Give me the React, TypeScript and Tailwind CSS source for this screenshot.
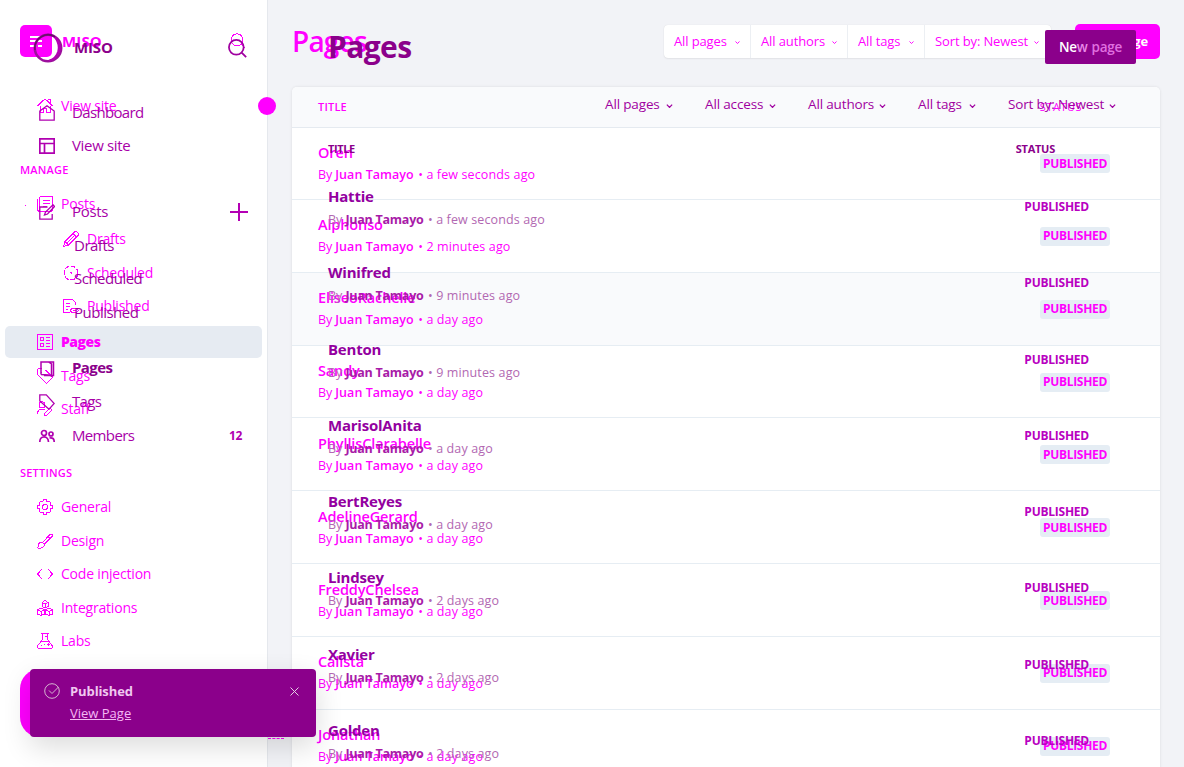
import React from "react";

type Glyph = { d: string; w?: number; size?: string; color?: string; crisp?: boolean };

function Icon({ d, w = 1, size = "h-4 w-4", color = "text-[#ff00ff]", crisp = true }: Glyph) {
  return (
    <svg
      viewBox="0 0 16 16"
      className={`block shrink-0 ${size} ${color}`}
      fill="none"
      stroke="currentColor"
      strokeWidth={w}
      shapeRendering={crisp ? "crispEdges" : "auto"}
    >
      <path d={d} />
    </svg>
  );
}

const icons = {
  home: "M.5 8 8 .8 15.5 8M3.500 8v6.500h3v-4h3v4h4V8M10.5 1.5h2.5V5",
  posts: "M2.5.5h13v12q0 3-3 3H3q-2.500 0-2.500-2.500V2.500M2.500.5v12q0 3-2 3M5.500 4.500h7M5.500 7.500h7M5.500 10.500h4",
  pencil: "M.5 15.500 2 10.500 11.500 1q1.500-1 3 .5t.5 3L5.500 14ZM2 10.500l3.500 3.500M10 2.500l3.500 3.500M4 12l8-8",
  published: "M6.500 14.500H.5V1.500h9l3 3V7M3 5.500h4M3 8.500h4M3 11.500h2M7 12.500q4-5 8.500 0-4.500 5-8.500 0M10 12.500h2.500",
  pages: "M.5.5h15v15H.5ZM3.500 3.500h3v3h-3ZM3.500 9.500h3v3h-3ZM9 3.500h4M9 6.500h4M9 9.500h4M9 12.500h4",
  tags: "M1 .5h4M.5 1v5.500L9.500 15.500 15.500 9.500M15.500 9 8.500 2M3.500 4.500h1",
  staff: "M5 .8q3 0 3 3T5 7 2 4 5 .8M.5 13Q.5 8 5 8l3 1M8 12l5-5 2 2-5 5-2.500.5Z",
  gear: "M6.500.5h3l.5 2 2-.5L14 4l-.5 2 2 .5v3l-2 .5.5 2-2 2-2-.5-.5 2h-3l-.5-2-2 .5-2-2 .5-2-2-.5v-3l2-.5L2 4l2-2 2 .5ZM5.500 8q0-2.500 2.500-2.500T10.500 8 8 10.500 5.500 8",
  brush: "M5.500 9.500 13 1.500q1-1 2 0t0 2L7.500 11 5.500 9.500q-4-.5-4 3L.5 15q7 1 7-4M11 3.500l2 2",
  code: "M5 3 .5 8 5 13M11 3l4.500 5-4.500 5",
  blocks: "M8 .5l3 2v4L8 8 5 6.500v-4ZM5 2.500l3 1.500 3-1.500M8 4v4M4 8l3.500 2v4L4 15.500.5 14v-4ZM12 8l3.500 2v4L12 15.500 8.500 14v-4ZM.5 10 4 11.500 7.500 10M8.500 10l3.500 1.500 3.500-1.500M4 11.500v4M12 11.500v4",
  flask: "M4 .5h8M5.500.5v6L.5 13q-.5 2.500 2 2.500h11q2.500 0 2-2.500l-5-6.500v-6M3 8.500h10M8 3.500h2.500M10 11.500h3M11.500 10v3M4 12h1M7 11h1",
  house: "M.8 15.200V6L8 .8 15.200 6v9.200Z",
  layout: "M.8.800h14.400v14.400H.8ZM1 5.500h14M5.500 5.500V15",
  edit: "M8.500 3H.8v12.200h12.400V10M5.500 11l1-3L14 .8l1.500 1.700L8.500 10Z",
  pagesAlt: "M2 13.500V1h7.500l3 2v12L9.500 14 2 13.500M9.500 1h5v13.500H5",
  tagAlt: "M.8.800h6.500L15.200 9.500 10 15.200.8 7Z",
  members: "M5 2.500a2.500 2.500 0 1 1 0 5 2.500 2.500 0 0 1 0-5M.8 14Q.8 9 5 9t4.500 5M12 4a2 2 0 1 1 0 4 2 2 0 0 1 0-4M10.500 10q4.700-1 4.700 4",
};

const nav = "text-[14px] tracking-[-0.2px] leading-none whitespace-nowrap";

function BaseItem({ d, label, h, sub = false }: { d?: string; label: string; h: string; sub?: boolean }) {
  return (
    <div className={`flex items-center ${h} ${sub ? "pl-[63px]" : "pl-[37px]"} gap-2 text-[#ff00ff]`}>
      {d ? (
        <Icon d={d} />
      ) : (
        <svg viewBox="0 0 16 16" className="block h-4 w-4 shrink-0" fill="none" stroke="currentColor" shapeRendering="crispEdges">
          <circle cx="8" cy="8" r="7" strokeDasharray="5 1.500" />
          <path d="M7 7.500h2M8 7v2" />
        </svg>
      )}
      <span className={nav}>{label}</span>
    </div>
  );
}

function BaseHeading({ label, h }: { label: string; h: string }) {
  return (
    <div className={`flex items-center pb-0.5 pl-5 text-[11px] font-semibold tracking-[0.2px] leading-none text-[#ff00ff] ${h}`}>
      {label}
    </div>
  );
}

function BaseSidebar() {
  return (
    <aside className="flex h-full w-[268px] shrink-0 flex-col border-r border-[#e5e8ed] bg-white">
      <div className="flex h-[82px] shrink-0 items-center justify-between pl-5 pr-[21px]">
        <div className="flex items-center gap-2.5">
          <span className="flex h-8 w-8 items-center justify-center rounded-[5px] bg-[#ff00ff]">
            <svg viewBox="0 0 14 14" className="h-3.5 w-3.5" stroke="white" strokeWidth="2" shapeRendering="crispEdges">
              <path d="M1 3h11M1 7h6M9 7h4M1 12h6M9 12h4" />
            </svg>
          </span>
          <span className="text-[15px] font-bold tracking-[0.15px] leading-none text-[#ff00ff]">MISO</span>
        </div>
        <Icon d="M7 .8a6 6 0 0 1 0 12A6 6 0 0 1 7 .8M11 11l4.500 4.500" />
      </div>
      <div className="flex h-12 shrink-0 items-center justify-between">
        <BaseItem d={icons.home} label="View site" h="h-8" />
        <span className="-mr-[9px] h-[18px] w-[18px] shrink-0 rounded-full bg-[#ff00ff]" />
      </div>
      <BaseHeading label="MANAGE" h="h-20 shrink-0" />
      <div className="-mt-[23px] flex flex-col">
        <div className="flex items-center">
          <span className="ml-[25px] mt-0.5 h-px w-px bg-[#ff00ff]" />
          <div className="-ml-[26px]">
            <BaseItem d={icons.posts} label="Posts" h="h-[34px]" />
          </div>
        </div>
        <BaseItem d={icons.pencil} label="Drafts" h="h-[35px]" sub />
        <BaseItem label="Scheduled" h="h-[33px]" sub />
        <BaseItem d={icons.published} label="Published" h="h-[34px]" sub />
      </div>
      <div className="mx-[5px] mt-[3px] flex h-8 shrink-0 items-center gap-2 rounded-[5px] bg-[#e6ebf2] pl-8 text-[#ff00ff]">
        <Icon d={icons.pages} />
        <span className="text-[14px] font-extrabold tracking-[-0.5px] leading-none">Pages</span>
      </div>
      <BaseItem d={icons.tags} label="Tags" h="h-[35px]" />
      <BaseItem d={icons.staff} label="Staff" h="h-8" />
      <BaseHeading label="SETTINGS" h="mt-7 h-10" />
      <BaseItem d={icons.gear} label="General" h="h-7" />
      <BaseItem d={icons.brush} label="Design" h="mt-[3px] h-[34px]" />
      <BaseItem d={icons.code} label="Code injection" h="h-8" />
      <BaseItem d={icons.blocks} label="Integrations" h="mt-px h-[34px]" />
      <BaseItem d={icons.flask} label="Labs" h="h-8" />
    </aside>
  );
}

function Chevron({ size, color }: { size: string; color: string }) {
  return (
    <svg viewBox="0 0 8 5" className={`block shrink-0 ${size} ${color}`} fill="none" stroke="currentColor" strokeWidth="1.600">
      <path d="M.7.8 4 4.200 7.300.8" />
    </svg>
  );
}

const baseFilters = [
  { label: "All pages", w: "w-[87px]" },
  { label: "All authors", w: "w-[97px]" },
  { label: "All tags", w: "w-[77px]" },
  { label: "Sort by: Newest", w: "w-[126px]" },
];

const baseRows = [
  ["Oren", "a few seconds ago"],
  ["Alphonso", "2 minutes ago"],
  ["EliseoRachelle", "a day ago"],
  ["Sandy", "a day ago"],
  ["PhyllisClarabelle", "a day ago"],
  ["AdelineGerard", "a day ago"],
  ["FreddyChelsea", "a day ago"],
  ["Calista", "a day ago"],
  ["Jonathan", "a day ago"],
];

function BaseMain() {
  return (
    <main className="flex min-w-0 flex-1 flex-col pl-6 pr-6">
      <header className="flex h-[87px] shrink-0 items-start justify-between">
        <h1 className="mt-[27px] text-[28px] font-semibold tracking-[-0.8px] leading-[28px] text-[#ff00ff]">Pages</h1>
        <div className="flex">
          <div className="mt-[25px] flex h-[33px] rounded bg-white shadow-[0_0_1px_rgba(0,0,0,0.12),0_1px_2px_rgba(0,0,0,0.06)]">
            {baseFilters.map((f) => (
              <div
                key={f.label}
                className={`flex items-center justify-between border-r border-[#eceff3] pl-2.5 pr-[10px] text-[#ff00ff] last:border-r-0 last:pr-3 ${f.w}`}
              >
                <span className="whitespace-nowrap text-[13px] tracking-[-0.120px] leading-none">{f.label}</span>
                <Chevron size="mt-0.5 h-[3px] w-[5px]" color="text-[#ff00ff]" />
              </div>
            ))}
          </div>
          <button className="ml-6 mt-6 flex h-[35px] w-[85px] items-center justify-end rounded-[5px] bg-[#ff00ff] pr-3 text-[13px] font-bold tracking-[-0.2px] text-white">
            New page
          </button>
        </div>
      </header>
      <section className="flex-1 rounded-t-[5px] bg-white shadow-[0_0_3px_rgba(0,0,0,0.1)]">
        <div className="flex h-[41px] items-center justify-between rounded-t-[5px] border-b border-[#e5eaf0] bg-[#f9fafc] pb-0.5 pl-[26px] pr-[78px] text-[11px] leading-none text-[#ff00ff]">
          <span className="font-semibold tracking-[0.2px]">TITLE</span>
          <span className="tracking-[0.5px]">STATUS</span>
        </div>
        <div className="-mt-px">
          {baseRows.map(([title, when], i) => (
            <div
              key={title}
              className={`flex h-[72.850px] justify-between border-b border-[#e6edf3] pl-[26px] pr-[50px] ${i === 2 ? "bg-[#f9fafc]" : ""}`}
            >
              <div className="pt-[16.500px] text-[#ff00ff]">
                <h2 className="text-[14.500px] font-semibold tracking-[-0.130px] leading-[18px]">{title}</h2>
                <p className="mt-1 whitespace-nowrap text-[12.500px] tracking-[-0.100px] leading-[18px]">
                  By <b className="font-semibold tracking-[0.050px]">Juan Tamayo</b>
                  <span className="ml-[1px] tracking-[0.130px]"> • {when}</span>
                </p>
              </div>
              <span className="mt-[27px] flex h-[19px] w-[70px] items-center justify-center rounded-[3px] bg-[#e5edf4] text-[12px] font-bold tracking-[-0.300px] leading-none text-[#ff00ff]">
                PUBLISHED
              </span>
            </div>
          ))}
        </div>
      </section>
    </main>
  );
}

function TopItem({ d, label, h, w = 1.3, active = false, tight = true }: { d: string; label: string; h: string; w?: number; active?: boolean; tight?: boolean }) {
  const tracking = tight ? "tracking-[-0.650px]" : "tracking-[-0.330px]";
  return (
    <div className={`flex items-center gap-[17px] pl-[39px] ${h}`}>
      <Icon d={d} w={w} color="text-[#b000b0]" crisp={false} />
      <span className={`-mt-0.5 whitespace-nowrap text-[15px] leading-none ${active ? "font-bold tracking-[-0.600px] text-[#8b008b]" : `${tracking} text-[#a800a8]`}`}>
        {label}
      </span>
    </div>
  );
}

function TopSub({ label, h }: { label: string; h: string }) {
  return <div className={`flex items-center pb-0.5 pl-[74px] text-[15px] tracking-[-0.500px] leading-none text-[#a000a0] ${h}`}>{label}</div>;
}

function TopSidebar() {
  return (
    <aside className="flex h-full w-[268px] shrink-0 flex-col">
      <div className="flex h-24 shrink-0 items-center justify-between pl-[33px] pr-[21px]">
        <div className="flex items-center gap-[11px]">
          <svg viewBox="0 0 30 30" className="h-[30px] w-[30px]" fill="none">
            <circle cx="15" cy="15" r="13.200" stroke="#9c109c" strokeWidth="2.500" />
            <path d="M21 3.500q9 7 5 16-3 7-10 8 7-2 9-9 2-8-4-15Z" fill="#b400b4" stroke="#b400b4" strokeWidth="1.500" />
            <path d="M2 17A13.200 13.200 0 0 1 22 3.800" stroke="#681068" strokeWidth="1.500" />
          </svg>
          <span className="-mt-0.5 text-[15px] font-bold tracking-[-0.150px] leading-none text-[#8b008b]">MISO</span>
        </div>
        <Icon d="M7 .8a6.200 6.200 0 0 1 0 12.400A6.200 6.200 0 0 1 7 .8M11.500 11.500l3.800 3.800" w={1.500} size="h-[19px] w-[19px]" color="text-[#a000a0]" crisp={false} />
      </div>
      <TopItem d={icons.house} label="Dashboard" h="h-[34px]" />
      <TopItem d={icons.layout} label="View site" h="h-8" w={1.700} tight={false} />
      <div className="mt-8 flex h-9 items-center justify-between pr-5">
        <TopItem d={icons.edit} label="Posts" h="h-9" tight={false} />
        <svg viewBox="0 0 18 18" className="h-[18px] w-[18px]" stroke="#b400b4" strokeWidth="2">
          <path d="M9 0v18M0 9h18" />
        </svg>
      </div>
      <TopSub label="Drafts" h="h-8" />
      <TopSub label="Scheduled" h="h-[34px]" />
      <TopSub label="Published" h="h-[34px]" />
      <TopItem d={icons.pagesAlt} label="Pages" h="mt-[22px] h-[33px]" w={1.500} active />
      <TopItem d={icons.tagAlt} label="Tags" h="h-[34px]" />
      <div className="flex items-center justify-between pr-[26px]">
        <TopItem d={icons.members} label="Members" h="h-[34px]" w={1.700} />
        <span className="text-[12px] font-bold tracking-[-0.3px] leading-none text-[#b000b0]">12</span>
      </div>
    </aside>
  );
}

const topFilters = [
  { label: "All pages", w: "w-[69px]" },
  { label: "All access", w: "w-[72px]" },
  { label: "All authors", w: "w-[79px]" },
  { label: "All tags", w: "w-[59px]" },
  { label: "Sort by: Newest", w: "w-[109px]" },
];

const topRows = [
  ["Hattie", "a few seconds ago"],
  ["Winifred", "9 minutes ago"],
  ["Benton", "9 minutes ago"],
  ["MarisolAnita", "a day ago"],
  ["BertReyes", "a day ago"],
  ["Lindsey", "2 days ago"],
  ["Xavier", "2 days ago"],
  ["Golden", "2 days ago"],
];

function TopMain() {
  return (
    <main className="flex min-w-0 flex-1 flex-col pl-[60px] pr-12">
      <header className="flex h-[93px] shrink-0 items-start justify-between">
        <h1 className="mt-[31px] text-[30px] font-bold tracking-[-0.600px] leading-8 text-[#8b008b]">Pages</h1>
        <button className="mt-[30px] flex h-[34px] w-[91px] items-center justify-center rounded-[2px] bg-[#8b008b] text-[13.500px] font-semibold tracking-[-0.250px] text-white">
          Ne<span className="text-[#e88ae8]">w</span> <span className="ml-1 text-[#e070e0]">page</span>
        </button>
      </header>
      <div className="flex h-6 shrink-0 items-center justify-end gap-[31px] pr-5">
        {topFilters.map((f) => (
          <div key={f.label} className={`flex items-center justify-between ${f.w}`}>
            <span className="whitespace-nowrap pl-px text-[13.500px] tracking-[-0.150px] leading-none text-[#a000a0]">{f.label}</span>
            <Chevron size="mt-px h-1 w-[7px]" color="text-[#a000a0]" />
          </div>
        ))}
      </div>
      <div className="mt-[23px] flex h-4 shrink-0 items-center justify-between pr-[81px] text-[11px] font-bold leading-none text-[#8b008b]">
        <span className="tracking-[-0.400px]">TITLE</span>
        <span className="tracking-[-0.250px]">STATUS</span>
      </div>
      <div className="mt-4 flex flex-col">
        {topRows.map(([title, when]) => (
          <div key={title} className="flex h-[76.300px] shrink-0 justify-between pr-[47px]">
            <div className="pt-[15px]">
              <h2 className="text-[15px] font-bold tracking-[-0.220px] leading-[18px] text-[#9300a0]">{title}</h2>
              <p className="mt-[6px] whitespace-nowrap text-[12.500px] tracking-[-0.050px] leading-[18px] text-[#b268b2]">
                By <b className="font-bold tracking-[-0.250px] text-[#a81ba8]">Juan Tamayo</b>
                <span className="ml-[1px] tracking-[0.130px]"> • {when}</span>
              </p>
            </div>
            <span className="mt-[27px] h-4 text-[12px] font-bold tracking-[-0.240px] leading-4 text-[#b800c0]">PUBLISHED</span>
          </div>
        ))}
      </div>
    </main>
  );
}

function Toast() {
  return (
    <div className="absolute left-[30px] top-[669px] h-[68px] w-[286px]">
      <div className="absolute -left-[10px] top-0 h-[68px] w-[260px] rounded-[20px] bg-[#ff00ff]" />
      <div className="absolute left-[238px] top-[69px] h-px w-4 border-t border-dashed border-[#ff00ff]" />
      <div className="relative flex h-full items-start rounded-[4px] bg-[#8b008b] pl-3.5 pr-[17px] pt-3.5 text-white shadow-[0_10px_28px_rgba(0,0,0,0.14)]">
        <svg viewBox="0 0 16 16" className="h-4 w-4 text-[#d5b5d0]" fill="none" stroke="currentColor">
          <path d="M8 .7a7.300 7.300 0 1 1 0 14.600A7.300 7.300 0 0 1 8 .7M5 7.500l3 3L14.500 4" />
        </svg>
        <div className="ml-2.5 flex-1">
          <div className="text-[13px] font-bold tracking-[-0.100px] leading-4 text-[#f0c8f0]">Published</div>
          <div className="mt-[6px] text-[13px] leading-4 text-[#f4b8f4] underline">View Page</div>
        </div>
        <svg viewBox="0 0 9 9" className="mt-1 h-[9px] w-[9px]" stroke="#e4cfe4">
          <path d="m.5.500 8 8m0-8-8 8" />
        </svg>
      </div>
    </div>
  );
}

export default function App() {
  return (
    <div className="relative h-[767px] w-[1184px] overflow-hidden bg-[#f2f3f7] font-['Open_Sans','Noto_Sans',sans-serif]">
      <div className="flex h-full">
        <BaseSidebar />
        <BaseMain />
      </div>
      <div className="absolute inset-0 flex">
        <TopSidebar />
        <TopMain />
      </div>
      <Toast />
    </div>
  );
}
